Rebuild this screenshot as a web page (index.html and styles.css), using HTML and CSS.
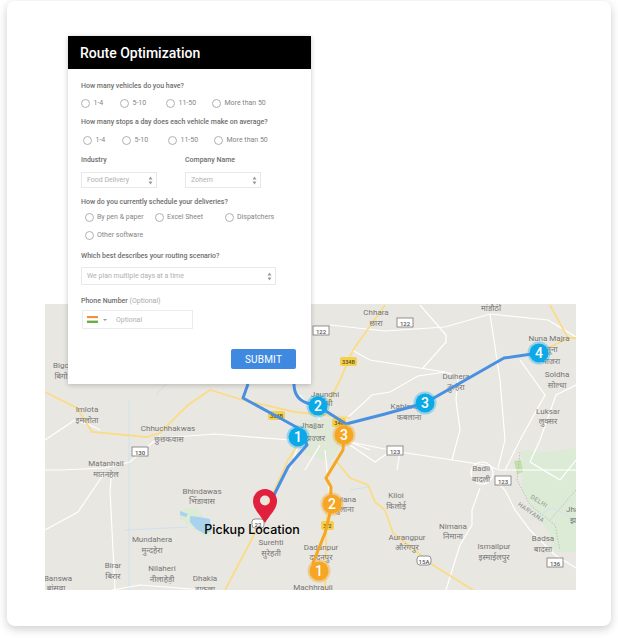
FILE: index.html
```html
<!DOCTYPE html>
<html lang="en">
<head>
<meta charset="utf-8">
<title>Route Optimization</title>
<link rel="stylesheet" href="styles.css">
</head>
<body>
<main class="card">
  <div class="stage">
    <svg class="map" viewBox="45 304 531 286" width="531" height="286" xmlns="http://www.w3.org/2000/svg">
      <rect x="45" y="304" width="531" height="286" fill="#e9e7e2"/>
      <path class="park" d="M522 450 L545 452 L576 448 L576 552 L555 552 L548 530 L535 512 L522 490Z"/>
      <path class="park-dark" d="M514 461 L521 460 L523 472 L517 474Z"/>
      <path class="park" d="M180 510 L196 507 L204 518 L214 528 L208 538 L195 530 L180 518Z"/>
      <path class="park-light" d="M300 420 L330 418 L345 440 L330 462 L305 455Z"/>
      <path class="boundary" d="M520 452 L517 480 L530 505 L555 525 L560 550 M576 490 L550 520"/>
      <path class="water" d="M190 516 L199 517 L210 519 L211 531 L205 534 L196 529 L190 522Z M180 511 L188 514 L186 517 L180 515Z"/>
      <path class="stream" d="M129 400 L129 590 M125 530 L188 527 M156 395 L170 380 M530 520 L552 508 L566 515 L576 520 M350 490 L368 487"/>
      <g class="road">
        <path d="M330 325 L385 331 L445 327 L490 314 L548 320 L576 337"/>
        <path d="M490 314 L500 380 L505 440 L498 468"/>
        <path d="M352 350 L370 360 L445 372 L418 376 L390 392 L372 395 L345 420"/>
        <path d="M445 372 L458 376 L456 400 L460 430 L452 460"/>
        <path d="M420 305 L446 335 L446 342 L423 368"/>
        <path d="M45 440 L75 420 L90 425 L100 430 M160 438 L215 434 L290 440"/>
        <path d="M160 436 L130 462 L105 468 L62 470 L45 470"/>
        <path d="M112 470 L110 490 L112 530 L115 590"/>
        <path d="M105 472 L78 512 L45 530"/>
        <path d="M340 440 L400 452 L485 465 L500 470 L576 470"/>
        <path d="M350 445 L375 462 L392 450 M400 452 L397 470"/>
        <path d="M495 480 L505 490 L515 510 L530 530 L555 555 L576 568"/>
        <path d="M480 488 L472 510 L472 525 L460 545 L446 590"/>
        <path d="M520 360 L545 395 L520 440 L505 470 M576 385 L556 395 L540 440 L530 462 L560 480 L576 460"/>
        <path d="M300 440 L290 470 M320 445 L305 470 M325 450 L330 500 M320 420 L300 395 M345 440 L370 450 M300 430 L270 415 M205 590 L140 585 L112 590"/>
        <circle cx="482" cy="473" r="11"/>
      </g>
      <g class="highway">
        <path d="M45 392 L77 408 L92 432 L147 437 L160 433 L188 405 L210 390 L243 400 L295 412 L350 418"/>
        <path d="M385 305 L353 350 L340 380 L330 400 L320 415"/>
        <path d="M225 590 L253 537 L288 460 L302 438"/>
        <path d="M337 462 L350 478 L368 485 L375 502 L385 510 L393 533 L433 565 L473 590"/>
        <path d="M550 305 L568 338 L540 352 M568 338 L576 338"/>
        <path d="M327 500 L325 590"/>
      </g>
      <g class="shield">
        <rect x="397" y="318" width="16" height="9"/><text x="405" y="325.5">122</text>
        <rect x="313" y="326" width="16" height="9"/><text x="321" y="333.5">122</text>
        <rect x="387" y="446" width="16" height="9"/><text x="395" y="453.5">123</text>
        <rect x="495" y="476" width="16" height="9"/><text x="503" y="483.5">123</text>
        <rect x="547" y="558" width="16" height="9"/><text x="555" y="565.5">136</text>
        <rect x="132" y="447" width="16" height="9"/><text x="140" y="454.5">130</text>
        <rect x="417" y="556" width="14" height="9" rx="3"/><text x="424" y="563.5">15A</text>
        <rect x="252" y="519" width="12" height="9" rx="3"/><text x="258" y="526.5">22</text>
      </g>
      <g class="shield-y">
        <rect x="340" y="357" width="17" height="9" rx="2"/><text x="348.500" y="364">334B</text>
        <rect x="268" y="411" width="17" height="9" rx="2"/><text x="276.500" y="418">334B</text>
        <rect x="332" y="418" width="14" height="9" rx="2"/><text x="339" y="425">348</text>
        <rect x="321" y="521" width="13" height="9" rx="2"/><text x="327.500" y="528">3/2</text>
      </g>
      <g class="label">
        <text x="61" y="368">Bigo</text><text x="61" y="379">बिगो</text>
        <text x="376" y="315">Chhara</text><text x="376" y="326">छारा</text>
        <text x="491" y="311">मांडौठी</text>
        <text x="549" y="341">Nuna Majra</text><text x="552" y="352">नूना</text><text x="551" y="364">माजरा</text>
        <text x="557" y="377">Soldha</text><text x="557" y="388">सोल्धा</text>
        <text x="456" y="379">Dulhera</text><text x="456" y="390">दुल्हेरा</text>
        <text x="405" y="409">Kablana</text><text x="409" y="420">कबलाना</text>
        <text x="548" y="414">Luksar</text><text x="548" y="424">लुक्सर</text>
        <text x="325" y="397">Jaundhi</text><text x="325" y="406">जौंधी</text>
        <text x="312" y="428">Jhajjar</text><text x="315" y="441">झज्जर</text>
        <text x="87" y="412">Imlota</text><text x="87" y="423">इमलोता</text>
        <text x="168" y="431">Chhuchhakwas</text><text x="169" y="442">छुछकवास</text>
        <text x="106" y="466">Matanhail</text><text x="106" y="477">मातनहेल</text>
        <text x="202" y="494">Bhindawas</text><text x="202" y="504">भिंडावास</text>
        <text x="271" y="545">Surehti</text><text x="271" y="556">सुरेहती</text>
        <text x="152" y="542">Mundahera</text><text x="152" y="553">मुन्दहेरा</text>
        <text x="113" y="568">Birar</text><text x="113" y="579">बिरार</text>
        <text x="162" y="571">Nilaheri</text><text x="162" y="582">नीलाहेड़ी</text>
        <text x="205" y="581">Dhakla</text><text x="205" y="592">ढाकला</text>
        <text x="58" y="581">Banswa</text><text x="56" y="591">बांसवा</text>
        <text x="313" y="590">Machhrauli</text>
        <text x="396" y="498">Kiloi</text><text x="396" y="509">किलोई</text>
        <text x="481" y="471">Badli</text><text x="481" y="482">बादली</text>
        <text x="453" y="529">Nimana</text><text x="453" y="539">निमाना</text>
        <text x="407" y="540">Aurangpur</text><text x="407" y="550">औरंगपुर</text>
        <text x="494" y="549">Ismailpur</text><text x="494" y="560">इस्माईलपुर</text>
        <text x="543" y="541">Badsa</text><text x="543" y="552">बादसा</text>
        <text x="321" y="550">Dadanpur</text><text x="321" y="560">दादनपुर</text>
        <text x="344" y="502">Sulana</text><text x="344" y="512">सुलाना</text>
        <text x="574" y="512">Jhar</text><text x="574" y="523">झा</text>
      </g>
      <g class="region">
        <text transform="translate(538 503) rotate(32)">DELHI</text>
        <text transform="translate(530 514) rotate(35)">HARYANA</text>
      </g>
      <path class="route-blue" d="M539 353 L504 358 L425 403 L385 414 L346 424 L318 406 L307 403 C298 400 294 393 294 384"/>
      <path class="route-blue" d="M248 384 L243 398 L298 428 L307 445 L288 467 L273 497"/>
      <path class="route-orange" d="M344 435 L343 450 L326 478 L331 487 L330 513 L325 533 L313 563 L319 571"/>
      <g class="marker-blue">
        <circle class="halo" cx="298" cy="437" r="11.500"/><circle cx="298" cy="437" r="9.500"/><text x="298" y="442">1</text>
        <circle class="halo" cx="318" cy="406" r="11.500"/><circle cx="318" cy="406" r="9.500"/><text x="318" y="411">2</text>
        <circle class="halo" cx="425" cy="403" r="11.500"/><circle cx="425" cy="403" r="9.500"/><text x="425" y="408">3</text>
        <circle class="halo" cx="539" cy="353" r="11.500"/><circle cx="539" cy="353" r="9.500"/><text x="539" y="358">4</text>
      </g>
      <g class="marker-orange">
        <circle class="halo" cx="344" cy="435" r="11.500"/><circle cx="344" cy="435" r="9.500"/><text x="344" y="440">3</text>
        <circle class="halo" cx="332" cy="504" r="11.500"/><circle cx="332" cy="504" r="9.500"/><text x="332" y="509">2</text>
        <circle class="halo" cx="319" cy="571" r="11.500"/><circle cx="319" cy="571" r="9.500"/><text x="319" y="576">1</text>
      </g>
      <path class="pin" fill-rule="evenodd" d="M265 523 C259 513 253 509 253 501 A12 12 0 0 1 277 501 C277 509 271 513 265 523Z M265 495.500 A5 5 0 1 0 265.010 505.500 A5 5 0 1 0 265 495.500Z"/>
      <text class="pickup" x="252" y="534">Pickup Location</text>
    </svg>

    <form class="panel">
      <h1 class="panel-title">Route Optimization</h1>
      <div class="panel-body">
        <p class="question">How many vehicles do you have?</p>
        <div class="options">
          <span class="option"><i class="radio"></i>1-4</span>
          <span class="option"><i class="radio"></i>5-10</span>
          <span class="option"><i class="radio"></i>11-50</span>
          <span class="option"><i class="radio"></i>More than 50</span>
        </div>
        <p class="question q-stops">How many stops a day does each vehicle make on average?</p>
        <div class="options options-shift">
          <span class="option"><i class="radio"></i>1-4</span>
          <span class="option"><i class="radio"></i>5-10</span>
          <span class="option"><i class="radio"></i>11-50</span>
          <span class="option"><i class="radio"></i>More than 50</span>
        </div>
        <div class="two-col">
          <div class="field">
            <p class="question">Industry</p>
            <div class="select select-small">Food Delivery<svg class="updown" viewBox="0 0 5 9" width="5" height="9"><path d="M2.500 0.500L4.500 3.500H0.500ZM2.500 8.500L0.500 5.500H4.500Z"/></svg></div>
          </div>
          <div class="field">
            <p class="question">Company Name</p>
            <div class="select select-small">Zohem<svg class="updown" viewBox="0 0 5 9" width="5" height="9"><path d="M2.500 0.500L4.500 3.500H0.500ZM2.500 8.500L0.500 5.500H4.500Z"/></svg></div>
          </div>
        </div>
        <p class="question q-schedule">How do you currently schedule your deliveries?</p>
        <div class="option-grid">
          <span class="option"><i class="radio"></i>By pen &amp; paper</span>
          <span class="option"><i class="radio"></i>Excel Sheet</span>
          <span class="option"><i class="radio"></i>Dispatchers</span>
          <span class="option"><i class="radio"></i>Other software</span>
        </div>
        <p class="question q-scenario">Which best describes your routing scenario?</p>
        <div class="select select-wide">We plan multiple days at a time<svg class="updown" viewBox="0 0 5 9" width="5" height="9"><path d="M2.500 0.500L4.500 3.500H0.500ZM2.500 8.500L0.500 5.500H4.500Z"/></svg></div>
        <p class="question q-phone">Phone Number <span class="muted">(Optional)</span></p>
        <div class="phone">
          <svg class="flag" viewBox="0 0 11 7" width="11" height="7"><rect width="11" height="2.400" fill="#f0923a"/><rect y="2.400" width="11" height="2.200" fill="#fff"/><rect y="4.600" width="11" height="2.400" fill="#6cae45"/></svg>
          <svg class="caret" viewBox="0 0 4 2" width="4" height="2"><path d="M0 0H4L2 2Z"/></svg>
          <span class="phone-hint">Optional</span>
        </div>
        <div class="actions"><button class="submit" type="button">SUBMIT</button></div>
      </div>
    </form>
  </div>
</main>
</body>
</html>
```
FILE: styles.css
```css
* { box-sizing: border-box; }
html, body { margin: 0; background: #fff; }
body { width: 618px; height: 638px; overflow: hidden; font-family: Roboto, "Liberation Sans", sans-serif; }
.card {
  margin: 1px 7px 0;
  height: 625px;
  background: #fff;
  border-radius: 8px;
  box-shadow: 0 3px 10px rgba(0, 0, 0, 0.2);
}
.stage { display: grid; }
.map { grid-area: 1 / 1; margin: 303px 0 0 38px; display: block; }
.panel {
  grid-area: 1 / 1;
  align-self: start;
  z-index: 1;
  width: 243px;
  height: 348px;
  margin: 35px 0 0 61px;
  background: #fff;
  box-shadow: 0 1px 5px rgba(0, 0, 0, 0.22);
}
.panel-title {
  margin: 0;
  height: 33px;
  padding-left: 12px;
  background: #000;
  color: #fff;
  font-size: 14px;
  font-weight: 500;
  line-height: 34px;
}
.panel-body { padding: 13px 0 0 13px; }
.question {
  margin: 0;
  font-size: 7px;
  font-weight: 500;
  line-height: 9px;
  color: #6e6e6e;
}
.options { display: grid; grid-template-columns: 39px 46px 46px auto; height: 11px; margin-top: 7px; }
.options-shift { margin-left: 2px; margin-top: 8px; }
.option { display: flex; align-items: center; font-size: 7px; color: #858585; line-height: 11px; white-space: nowrap; }
.radio {
  display: block;
  width: 9px;
  height: 9px;
  margin-right: 3.5px;
  border: 1px solid #b0b0b0;
  border-radius: 50%;
  background: #fff;
}
.q-stops { margin-top: 9px; }
.two-col { display: flex; gap: 28px; margin-top: 10px; }
.field { width: 76px; }
.select {
  display: flex;
  align-items: center;
  justify-content: space-between;
  padding: 0 3px 0 5px;
  background: #fff;
  border: 1px solid #e8e8e8;
  color: #b0b0b0;
  font-size: 7px;
}
.select-small { width: 76px; height: 16px; margin-top: 7px; }
.select-wide { width: 195px; height: 18px; margin-top: 6px; }
.updown { fill: #999; }
.q-schedule { margin-top: 10px; }
.option-grid {
  display: grid;
  grid-template-columns: repeat(3, 70px);
  row-gap: 7px;
  margin: 5px 0 0 3.500px;
}
.q-scenario { margin-top: 11px; }
.q-phone { margin-top: 12px; }
.muted { color: #aaa; font-weight: 400; }
.phone {
  display: flex;
  align-items: center;
  width: 111px;
  height: 19px;
  margin: 4px 0 0 1px;
  padding-left: 4px;
  border: 1px solid #ececec;
}
.flag { margin-right: 5px; }
.caret { fill: #999; margin-right: 9px; }
.phone-hint { font-size: 7px; color: #b0b0b0; }
.actions { display: flex; justify-content: flex-end; margin: 20px 15px 0 0; }
.submit {
  width: 65px;
  height: 20px;
  padding: 0;
  border: 0;
  border-radius: 2px;
  background: #3f8ae0;
  color: #fff;
  font: 400 10px Roboto, sans-serif;
  letter-spacing: 0.2px;
}
.park { fill: #dcebd6; }
.park-dark { fill: #bfe0a8; }
.park-light { fill: #dbe8d4; opacity: 0.7; }
.boundary { fill: none; stroke: #b5b5aa; stroke-width: 0.8; stroke-dasharray: 1.5 1.5; }
.water { fill: #a8d2ee; }
.stream { fill: none; stroke: #cde2ef; stroke-width: 1; }
.road { fill: none; stroke: #fff; stroke-width: 1.2; }
.highway { fill: none; stroke: #fbdc86; stroke-width: 1.8; }
.shield rect { fill: #fff; stroke: #777; stroke-width: 0.8; }
.shield text { font: 500 6px Roboto, sans-serif; fill: #555; text-anchor: middle; }
.shield-y rect { fill: #f5cf4e; }
.shield-y text { font: 500 5.500px Roboto, sans-serif; fill: #5d4e18; text-anchor: middle; }
.label text {
  font: 400 8px Roboto, "Noto Sans", sans-serif;
  fill: #757575;
  text-anchor: middle;
}
.region text { font: 400 6px Roboto, sans-serif; fill: #8a8a8a; letter-spacing: 0.5px; text-anchor: middle; }
.route-blue { fill: none; stroke: #4a90e2; stroke-width: 3; stroke-linejoin: round; }
.route-orange { fill: none; stroke: #f5a623; stroke-width: 3; stroke-linejoin: round; }
.marker-blue circle { fill: #0ba9e8; }
.marker-blue .halo { fill: rgba(11, 169, 232, 0.35); }
.marker-orange circle { fill: #f5a623; }
.marker-orange .halo { fill: rgba(245, 166, 35, 0.4); }
.marker-blue text, .marker-orange text { font: 500 14px Roboto, sans-serif; fill: #fff; text-anchor: middle; }
.pin { fill: #e0203c; }
.pickup { font: 500 12.500px Inter, "Open Sans", sans-serif; fill: #000; text-anchor: middle; }
```
